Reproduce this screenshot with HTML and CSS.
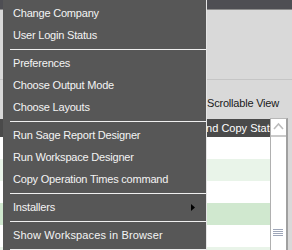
FILE: index.html
```html
<!DOCTYPE html>
<html>
<head>
<meta charset="utf-8">
<link rel="stylesheet" href="styles.css">
</head>
<body>
<div class="app">
  <div class="titlebar"></div>
  <div class="toolbar">
    <div class="rule"></div>
    <div class="option">Scrollable View</div>
  </div>
  <div class="grid">
    <div class="table">
      <div class="thead">and Copy Status</div>
      <div class="row"></div>
      <div class="row alt"></div>
      <div class="row"></div>
      <div class="row sel"></div>
      <div class="row"></div>
      <div class="row alt"></div>
    </div>
    <div class="scrollbar">
      <div class="sb-up">
        <svg width="15" height="16" viewBox="0 0 15 16"><polyline points="3,10 7.5,5 12,10" fill="none" stroke="#bcbcbc" stroke-width="1.6"/></svg>
      </div>
      <div class="sb-track"><div class="grip"></div></div>
    </div>
  </div>
</div>
<div class="menu">
  <div class="item"><span>Change Company</span></div>
  <div class="item"><span>User Login Status</span></div>
  <div class="sep"></div>
  <div class="item"><span>Preferences</span></div>
  <div class="item"><span>Choose Output Mode</span></div>
  <div class="item"><span>Choose Layouts</span></div>
  <div class="sep"></div>
  <div class="item"><span>Run Sage Report Designer</span></div>
  <div class="item"><span>Run Workspace Designer</span></div>
  <div class="item"><span>Copy Operation Times command</span></div>
  <div class="sep"></div>
  <div class="item"><span>Installers</span><svg class="arrow" width="4" height="7" viewBox="0 0 4 7"><polygon points="0,0 4,3.5 0,7" fill="#000"/></svg></div>
  <div class="sep"></div>
  <div class="item wide"><span>Show Workspaces in Browser</span></div>
  <div class="sep"></div>
</div>
</body>
</html>
```
FILE: styles.css
```css
html, body {
  margin: 0;
  padding: 0;
}
body {
  width: 292px;
  height: 250px;
  overflow: hidden;
  position: relative;
  background: #d9d9d9;
  font-family: "Liberation Sans", Arial, sans-serif;
  font-size: 11px;
  letter-spacing: -0.2px;
}
.app {
  display: flex;
  flex-direction: column;
}
.titlebar {
  height: 9px;
  background: #4e4e53;
  border-bottom: 1px solid #8c8c8c;
}
.toolbar {
  height: 109px;
  padding-top: 69px;
  box-sizing: border-box;
}
.rule {
  height: 1px;
  background: #c5c5c5;
}
.option {
  margin-top: 16px;
  padding-left: 207px;
  line-height: 14px;
  color: #1a1a1a;
  white-space: nowrap;
}
.grid {
  display: flex;
  padding-right: 4px;
}
.table {
  width: 270px;
}
.thead {
  height: 18px;
  line-height: 18px;
  background: #4a4a4a;
  color: #ffffff;
  padding-left: 200px;
  letter-spacing: 0;
  white-space: nowrap;
  overflow: hidden;
}
.row {
  height: 22px;
  background: #ffffff;
}
.row.alt {
  background: #e9f4e9;
}
.row.sel {
  background: #d0e8cf;
}
.scrollbar {
  width: 18px;
  box-sizing: border-box;
  margin-top: -1px;
  border-top: 1px solid #b8b8b8;
  border-left: 1px solid #b0b0b0;
  border-right: 2px solid #a0a0a0;
  background: #ffffff;
  display: flex;
  flex-direction: column;
}
.sb-up {
  height: 16px;
  border-bottom: 2px solid #cacaca;
}
.sb-up svg {
  display: block;
}
.sb-track {
  flex: 1;
  padding-top: 92px;
}
.grip {
  margin-left: 2px;
  width: 10px;
  height: 7px;
  background: repeating-linear-gradient(to bottom, #9ea6b8 0 1px, transparent 1px 2px);
}
.menu {
  position: absolute;
  left: 3px;
  top: 0;
  width: 203px;
  padding-top: 2px;
  background: #575757;
  border-right: 1px solid #e6e6e6;
  color: #f4f4f4;
}
.item {
  height: 22px;
  line-height: 22px;
  padding: 0 11px 0 10px;
  display: flex;
  justify-content: space-between;
  align-items: center;
  white-space: nowrap;
}
.item.wide {
  letter-spacing: 0.15px;
}
.arrow {
  display: block;
}
.sep {
  height: 1px;
  margin: 3px 0 2px 7px;
  background: #f0f0f0;
}
```
